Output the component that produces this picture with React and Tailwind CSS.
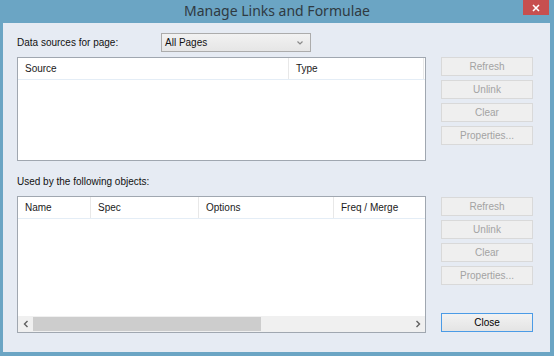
import React from "react";

const ui = { fontFamily: '"Liberation Sans", Arial, sans-serif' };

function DisabledButton({ children }) {
  return (
    <div className="h-[19px] w-[92px] flex items-center justify-center border border-[#d9d9d9] bg-[#efefef] text-[10px] text-[#a3a3a3]">
      {children}
    </div>
  );
}

function ButtonGroup() {
  return (
    <div className="flex flex-col gap-[4px]">
      <DisabledButton>Refresh</DisabledButton>
      <DisabledButton>Unlink</DisabledButton>
      <DisabledButton>Clear</DisabledButton>
      <DisabledButton>Properties...</DisabledButton>
    </div>
  );
}

function HeaderCell({ w, children, last }) {
  return (
    <div
      className={
        "h-full flex items-center pl-[7px] shrink-0 " +
        (last ? "" : "border-r border-[#e8e8e8]")
      }
      style={w ? { width: w } : undefined}
    >
      {children}
    </div>
  );
}

export default function App() {
  return (
    <div className="w-[554px] h-[356px] bg-[#6ba5c4] flex flex-col overflow-hidden" style={ui}>
      {/* Title bar */}
      <div className="relative h-[23px] shrink-0 flex items-center justify-center">
        <span
          className="text-[14px] text-[#2f3a42] leading-none pb-[2px]"
          style={{ fontFamily: '"Noto Sans", "Open Sans", sans-serif' }}
        >
          Manage Links and Formulae
        </span>
        <div className="absolute right-[5px] top-0 w-[26px] h-[15px] bg-[#c74f4f] flex items-center justify-center">
          <svg width="8" height="8" viewBox="0 0 8 8">
            <path d="M1 1L7 7M7 1L1 7" stroke="#ffffff" strokeWidth="1.6" />
          </svg>
        </div>
      </div>

      {/* Client area */}
      <div className="flex-1 ml-[3px] mr-[4px] mb-[4px] bg-[#e6ebf3] pl-[14px] pt-[10px] flex flex-col text-[10px] text-[#111]">
        {/* Row 1 */}
        <div className="h-[19px] flex items-center">
          <span className="w-[144px] shrink-0">Data sources for page:</span>
          <div className="w-[150px] h-[19px] border border-[#acacac] bg-gradient-to-b from-[#f2f2f2] to-[#e6e6e6] flex items-center justify-between pl-[3px] pr-[6px]">
            <span>All Pages</span>
            <svg width="8" height="6" viewBox="0 0 8 6">
              <path d="M1.5 1.5L4 4L6.5 1.5" stroke="#8a8a8a" strokeWidth="1.2" fill="none" />
            </svg>
          </div>
        </div>

        {/* Top list + buttons */}
        <div className="mt-[5px] flex gap-[15px]">
          <div className="w-[409px] h-[104px] border border-[#a0a7b0] bg-white flex flex-col">
            <div className="h-[22px] flex border-b border-[#e4edf6] text-[#1a1a1a]">
              <HeaderCell w={271}>Source</HeaderCell>
              <HeaderCell w={135}>Type</HeaderCell>
              <HeaderCell last />
            </div>
          </div>
          <ButtonGroup />
        </div>

        {/* Label */}
        <div className="h-[35px] pt-[6px] flex items-center">Used by the following objects:</div>

        {/* Bottom list + buttons */}
        <div className="flex gap-[15px]">
          <div className="w-[409px] h-[137px] border border-[#a0a7b0] bg-white flex flex-col">
            <div className="h-[22px] flex border-b border-[#e4edf6] text-[#1a1a1a]">
              <HeaderCell w={73}>Name</HeaderCell>
              <HeaderCell w={108}>Spec</HeaderCell>
              <HeaderCell w={135}>Options</HeaderCell>
              <HeaderCell last>Freq / Merge</HeaderCell>
            </div>
            <div className="flex-1" />
            <div className="h-[16px] bg-[#f0f0f0] flex items-center">
              <div className="w-[15px] h-full flex items-center justify-center">
                <svg width="6" height="8" viewBox="0 0 6 8">
                  <path d="M4.5 1L1.5 4L4.5 7" stroke="#606060" strokeWidth="1.4" fill="none" />
                </svg>
              </div>
              <div className="w-[228px] h-[14px] bg-[#cdcdcd]" />
              <div className="flex-1" />
              <div className="w-[15px] h-full flex items-center justify-center">
                <svg width="6" height="8" viewBox="0 0 6 8">
                  <path d="M1.5 1L4.5 4L1.5 7" stroke="#606060" strokeWidth="1.4" fill="none" />
                </svg>
              </div>
            </div>
          </div>
          <div className="flex flex-col justify-between pt-[1px]">
            <ButtonGroup />
            <div className="h-[19px] w-[92px] flex items-center justify-center border border-[#4b9be6] bg-gradient-to-b from-[#f2f2f2] to-[#e4e4e4] text-[10px] text-[#000] mb-[1px]">
              Close
            </div>
          </div>
        </div>
      </div>
    </div>
  );
}
